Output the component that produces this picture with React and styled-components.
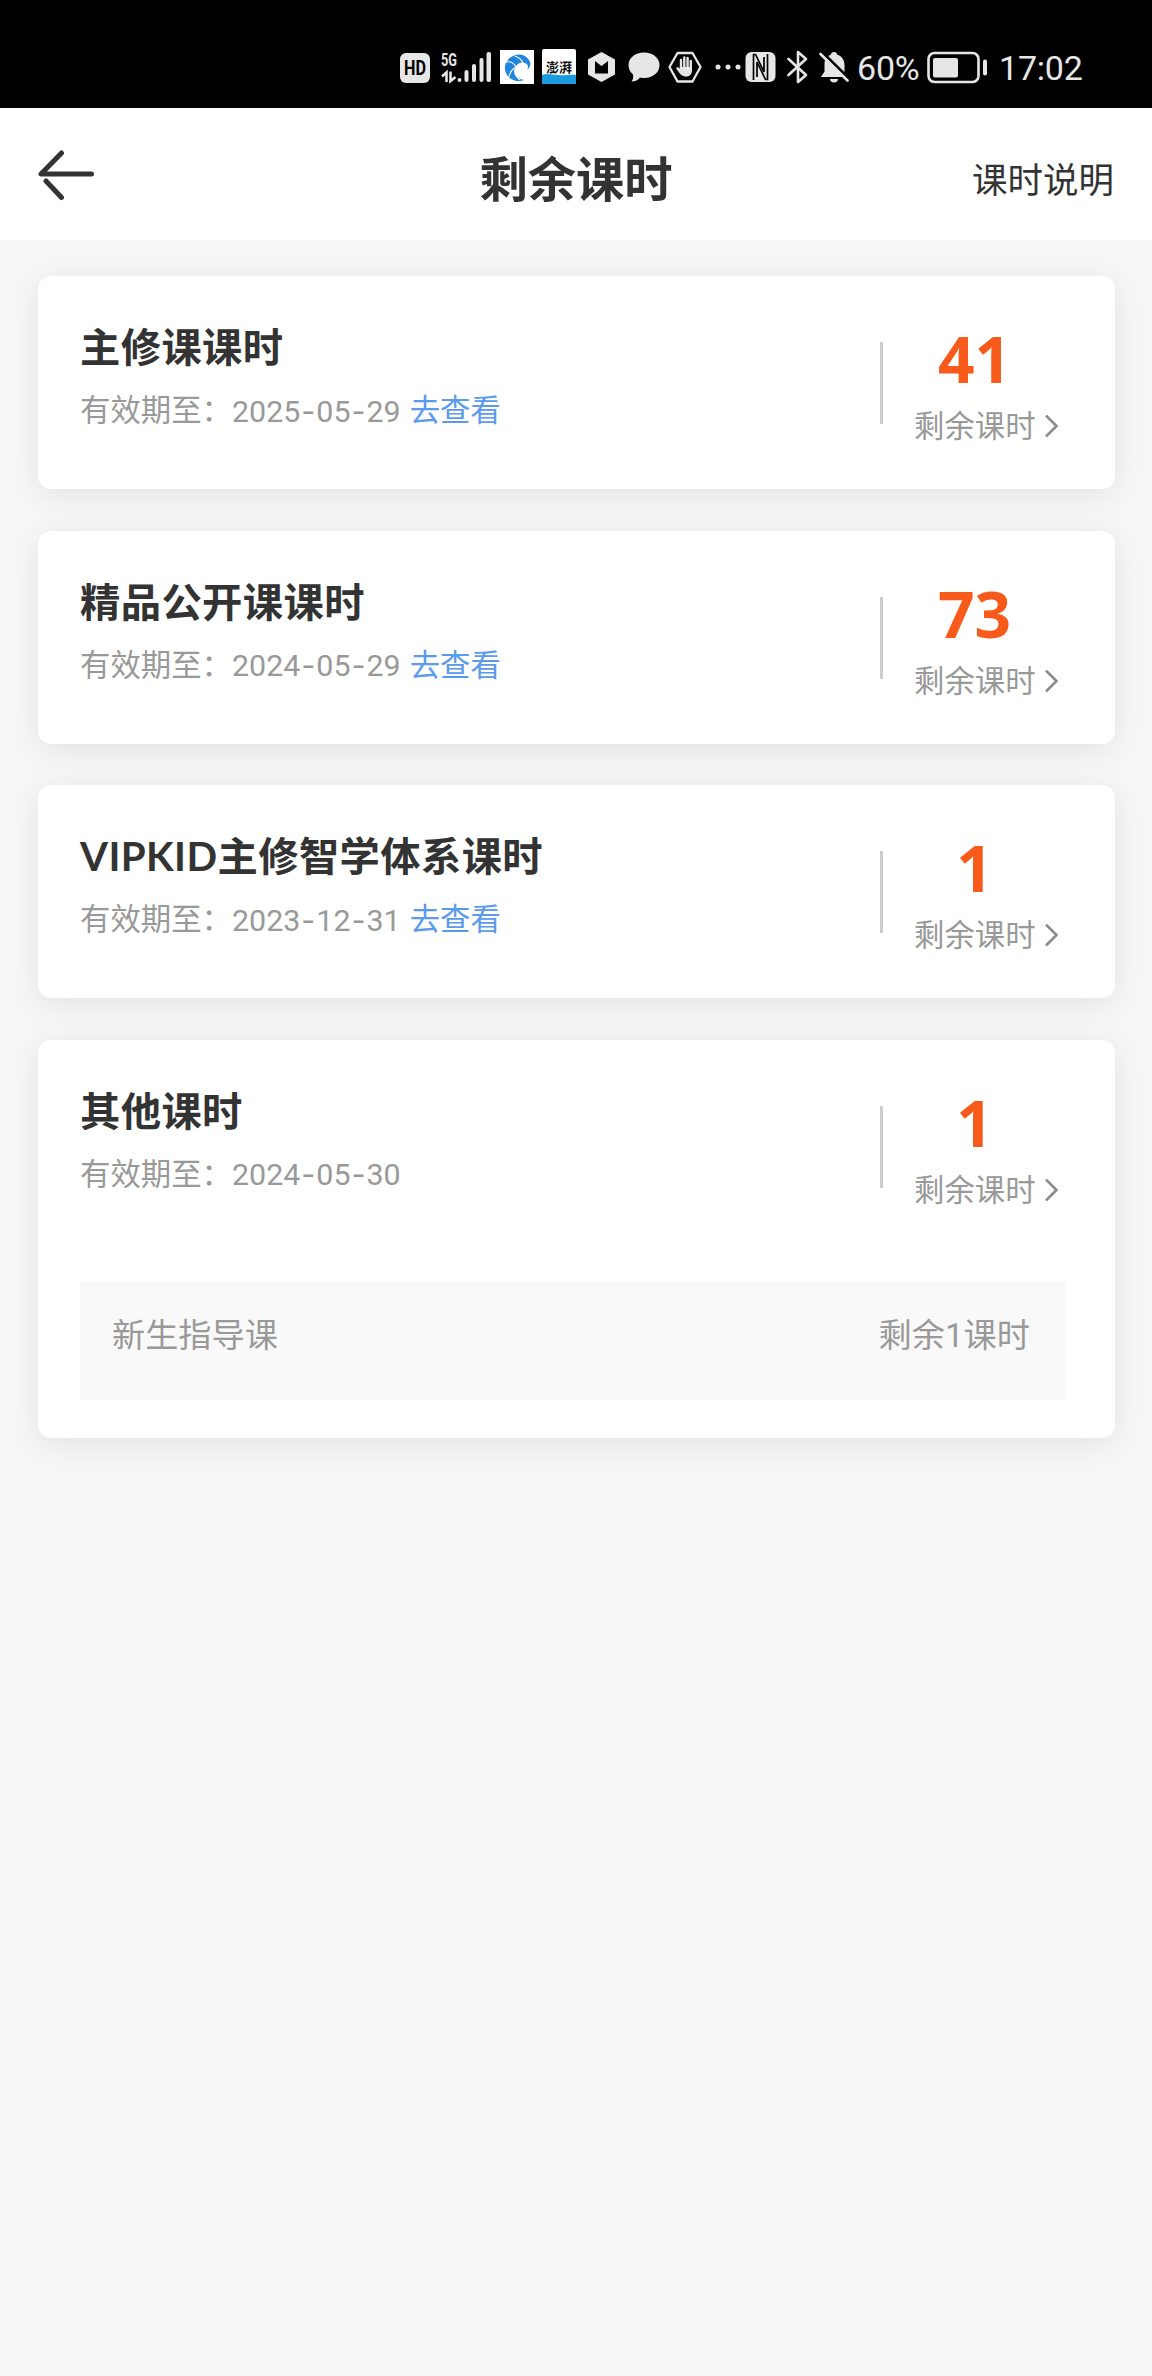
import styled, { createGlobalStyle } from "styled-components";

const lessons = [
  { title: "主修课课时", expire: "2025-05-29", hasLink: true, count: 41 },
  { title: "精品公开课课时", expire: "2024-05-29", hasLink: true, count: 73 },
  {
    title: "VIPKID主修智学体系课时",
    expire: "2023-12-31",
    hasLink: true,
    count: 1,
  },
  {
    title: "其他课时",
    expire: "2024-05-30",
    hasLink: false,
    count: 1,
    details: [{ name: "新生指导课", left: "剩余1课时" }],
  },
];

function StatusBar() {
  return (
    <StatusContainer>
      <StatusIcon $left={0} width="30" height="36" viewBox="0 0 30 36">
        <rect x="0" y="4" width="30" height="30" rx="6" />
        <text x="15" y="26" className="hd" textLength="22" lengthAdjust="spacingAndGlyphs">
          HD
        </text>
      </StatusIcon>
      <StatusIcon $left={11} width="50" height="36" viewBox="0 0 50 36">
        <text x="0" y="16.5" className="net" textLength="16" lengthAdjust="spacingAndGlyphs">
          5G
        </text>
        <path
          d="M1 27.5 5.5 23.5V33M9.5 22.5V32L14.5 28"
          fill="none"
          stroke="#e6e6e6"
          strokeWidth="2.6"
        />
        <circle cx="18.5" cy="31" r="2" />
        <rect x="23.5" y="21" width="4" height="12" rx="2" />
        <rect x="31" y="15" width="4" height="18" rx="2" />
        <rect x="38.5" y="9" width="4" height="24" rx="2" />
        <rect x="45.5" y="3" width="4.5" height="30" rx="2" />
      </StatusIcon>
      <StatusIcon $left={9} width="34" height="36" viewBox="0 0 34 36">
        <rect x="0" y="1" width="34" height="34" fill="#fff" />
        <path
          d="M29 11C26 6 19 4 13 7C6 10 3 18 6 24C9 31 17 34 24 31C18 30 14 26 15 21C15 16 20 12 25 14C28 15 29 18 27 21C31 18 31 14 29 11Z"
          fill="#1f86dc"
        />
        <path
          d="M6 13C11 12 14 14 16 18M9 28C10 23 12 20 16 18M15 7C20 9 22 11 23 14M20 31C16 28 14 24 15 20"
          fill="none"
          stroke="#fff"
          strokeWidth="1.2"
        />
      </StatusIcon>
      <StatusIcon $left={8} width="34" height="36" viewBox="0 0 34 36">
        <rect x="0" y="0" width="34" height="35" rx="2" fill="#fff" />
        <path
          d="M0 26C6 24 10 26 16 26C23 27 28 25 34 26V33Q34 35 32 35H2Q0 35 0 33Z"
          fill="#1a9be0"
        />
        <text x="17" y="22.5" className="paper">
          澎湃
        </text>
      </StatusIcon>
      <StatusIcon $left={12} width="27" height="36" viewBox="0 0 27 36">
        <path d="M13.5 3 27 10.5V25.5L13.5 33 0 25.5V10.5Z" />
        <path d="M7 12 13.5 17 20 12V24.5H7Z" fill="#000" />
      </StatusIcon>
      <StatusIcon $left={13} width="32" height="36" viewBox="0 0 32 36">
        <path d="M16 3.5C25 3.5 31.5 9 31.5 16C31.5 23.5 25 29 16 29C14.5 29 13.5 29 12 28.5C10 31 7.5 32.5 3.5 32.5C5 30.5 5.5 28 5 25.5C2 23 0.5 20 0.5 16C0.5 9 7 3.5 16 3.5Z" />
      </StatusIcon>
      <StatusIcon $left={8} width="34" height="36" viewBox="0 0 34 36">
        <path
          d="M9.5 4H24.5L32.5 18 24.5 32.5H9.5L1.5 18Z"
          fill="none"
          stroke="#e6e6e6"
          strokeWidth="2.3"
          strokeLinejoin="round"
        />
        <path
          d="M13 11V20M16.3 8.5V19M19.6 9V19M22.8 12V20"
          stroke="#e6e6e6"
          strokeWidth="2.4"
          strokeLinecap="round"
        />
        <path d="M11.8 18H24V21C24 25 22 27.5 18 27.5C14 27.5 12 25 10 22C9 20.5 7.5 19.5 8.5 18.5C9.5 17.8 11 18.5 11.8 20Z" />
      </StatusIcon>
      <StatusIcon $left={13} width="26" height="36" viewBox="0 0 26 36">
        <circle cx="3" cy="18" r="2.5" />
        <circle cx="13" cy="18" r="2.5" />
        <circle cx="23" cy="18" r="2.5" />
      </StatusIcon>
      <StatusIcon $left={4} width="31" height="36" viewBox="0 0 31 36">
        <rect x="0.5" y="3" width="30" height="30" rx="6" />
        <path
          d="M8.5 31V5.5H10.5L19 23V8M22.5 5V30.5H20.5L12 13V28"
          fill="none"
          stroke="#000"
          strokeWidth="1.7"
        />
      </StatusIcon>
      <StatusIcon $left={11} width="22" height="36" viewBox="0 0 22 36">
        <path
          d="M1.5 10 19 26 11 33V3L19 10 1.5 26"
          fill="none"
          stroke="#e6e6e6"
          strokeWidth="2.6"
          strokeLinejoin="round"
          strokeLinecap="round"
        />
      </StatusIcon>
      <StatusIcon $left={10} width="32" height="36" viewBox="0 0 32 36">
        <path d="M15 3C17 3 18 4 18 5.5C23 7 25.5 11 25.5 16V22.5L28 28H2L5.5 22.5V15C5.5 10.5 8 7 12 5.5C12 4 13 3 15 3Z" />
        <path d="M11 30H19C19 32 17.5 33.5 15 33.5C12.5 33.5 11 32 11 30Z" />
        <path d="M3.5 3.5 30.5 30" stroke="#000" strokeWidth="3" />
        <path
          d="M1.5 5 28.5 31.5"
          stroke="#e6e6e6"
          strokeWidth="2.6"
          strokeLinecap="round"
        />
      </StatusIcon>
      <StatusText $left={6} $width={65}>
        60%
      </StatusText>
      <StatusIcon $left={5} width="61" height="36" viewBox="0 0 61 36">
        <rect
          x="1.5"
          y="4"
          width="50"
          height="29"
          rx="6"
          fill="none"
          stroke="#e6e6e6"
          strokeWidth="2.6"
        />
        <rect x="6" y="9" width="25" height="19.5" rx="2" />
        <rect x="56" y="10.5" width="4" height="16" rx="2" />
      </StatusIcon>
      <StatusText $left={11} $width={84}>
        17:02
      </StatusText>
    </StatusContainer>
  );
}

function ExpireDate({ value }) {
  const [year, month, day] = value.split("-");
  return (
    <DateText>
      {year}
      <i>-</i>
      {month}
      <i>-</i>
      {day}
    </DateText>
  );
}

function LessonCard({ title, expire, hasLink, count, details }) {
  return (
    <Card>
      <CardMain>
        <Info>
          <CardTitle>{title}</CardTitle>
          <Expire>
            有效期至：
            <ExpireDate value={expire} />
            {hasLink && <CheckLink>去查看</CheckLink>}
          </Expire>
        </Info>
        <Divider />
        <CountBox>
          <Count>{count}</Count>
          <CountLabel>
            剩余课时
            <svg width="15" height="24" viewBox="0 0 15 24">
              <path
                d="M2 0.5 12.5 11 2 21.5"
                fill="none"
                stroke="#8c8c8c"
                strokeWidth="2.6"
              />
            </svg>
          </CountLabel>
        </CountBox>
      </CardMain>
      {details && (
        <DetailList>
          {details.map((item) => (
            <DetailRow key={item.name}>
              <span>{item.name}</span>
              <span>{item.left}</span>
            </DetailRow>
          ))}
        </DetailList>
      )}
    </Card>
  );
}

function App() {
  return (
    <>
      <GlobalStyle />
      <StatusBar />
      <Header>
        <BackButton>
          <svg width="58" height="52" viewBox="0 0 58 52">
            <path
              d="M23.5 3 3 24H53.5M8 31 23.5 47.5"
              fill="none"
              stroke="#333"
              strokeWidth="5"
              strokeLinecap="round"
              strokeLinejoin="round"
            />
          </svg>
        </BackButton>
        <PageTitle>剩余课时</PageTitle>
        <HelpLink>课时说明</HelpLink>
      </Header>
      <CardList>
        {lessons.map((lesson) => (
          <LessonCard key={lesson.title} {...lesson} />
        ))}
      </CardList>
    </>
  );
}

export default App;

const GlobalStyle = createGlobalStyle`
  * {
    box-sizing: border-box;
  }
  body {
    margin: 0;
    min-height: 2376px;
    background-color: #f7f7f7;
    font-family: Roboto, "Noto Sans CJK SC", sans-serif;
    color: #333;
  }
  svg {
    display: block;
    flex-shrink: 0;
  }
`;

const StatusContainer = styled.div`
  display: flex;
  align-items: center;
  height: 108px;
  padding: 26px 0 0 400px;
  background-color: #000;
`;

const StatusIcon = styled.svg`
  margin-left: ${({ $left }) => $left}px;
  fill: #e6e6e6;
  .hd {
    font: 700 20px Roboto, sans-serif;
    text-anchor: middle;
    fill: #000;
  }
  .net {
    font: 700 19px Roboto, sans-serif;
  }
  .paper {
    font: 700 13px "Noto Sans CJK SC", sans-serif;
    text-anchor: middle;
    fill: #111;
  }
`;

const StatusText = styled.span`
  flex-shrink: 0;
  width: ${({ $width }) => $width}px;
  margin-left: ${({ $left }) => $left}px;
  padding-top: 2px;
  font-size: 34px;
  line-height: 36px;
  letter-spacing: -0.2px;
  color: #e6e6e6;
`;

const Header = styled.header`
  display: grid;
  grid-template-columns: 1fr auto 1fr;
  align-items: center;
  height: 132px;
  padding: 13px 38px 0 38px;
  background-color: #fff;
`;

const BackButton = styled.div`
  cursor: pointer;
  padding-bottom: 9px;
`;

const PageTitle = styled.h1`
  margin: 0;
  font-size: 48.3px;
  line-height: 60px;
  font-weight: 700;
`;

const HelpLink = styled.span`
  justify-self: end;
  font-size: 35.5px;
  line-height: 48px;
  cursor: pointer;
`;

const CardList = styled.main`
  display: flex;
  flex-direction: column;
  gap: 41.5px;
  padding: 36px 37px 0 38px;
`;

const Card = styled.section`
  padding: 0 50px 0 42px;
  border-radius: 13px;
  background-color: #fff;
  box-shadow: 0 6px 34px rgba(0, 0, 0, 0.09);
`;

const CardMain = styled.div`
  display: flex;
  height: 213px;
`;

const Info = styled.div`
  flex: 1;
  padding-top: 45px;
`;

const CardTitle = styled.h2`
  margin: 0;
  font-family: Lato, "Noto Sans CJK SC", sans-serif;
  font-size: 40.3px;
  line-height: 52px;
  font-weight: 700;
  letter-spacing: 0.4px;
`;

const Expire = styled.div`
  display: flex;
  align-items: center;
  margin-top: 18px;
  height: 40px;
  font-size: 30.4px;
  line-height: 40px;
  color: #999;
`;

const DateText = styled.span`
  i {
    display: inline-block;
    width: 16px;
    text-align: center;
    font-family: Inter, sans-serif;
    font-style: normal;
  }
`;

const CheckLink = styled.span`
  margin-left: 9px;
  color: #5b9bed;
  cursor: pointer;
`;

const Divider = styled.div`
  width: 3px;
  height: 82px;
  margin-top: 66px;
  background-color: #ccc;
`;

const CountBox = styled.div`
  width: 182px;
  padding: 49px 0 0 31px;
`;

const Count = styled.div`
  width: 121px;
  text-align: center;
  font-family: "Noto Sans", sans-serif;
  font-size: 64px;
  line-height: 68px;
  font-weight: 700;
  color: #f75a1b;
`;

const CountLabel = styled.div`
  display: flex;
  align-items: center;
  gap: 8px;
  margin-top: 14px;
  font-size: 30.4px;
  line-height: 40px;
  white-space: nowrap;
  color: #999;
  cursor: pointer;
`;

const DetailList = styled.div`
  padding: 28px 0 38px;
`;

const DetailRow = styled.div`
  display: flex;
  justify-content: space-between;
  height: 119px;
  padding: 35px 35px 0 32px;
  background-color: #f9f9f9;
  font-size: 33.2px;
  line-height: 40px;
  color: #999;
`;
